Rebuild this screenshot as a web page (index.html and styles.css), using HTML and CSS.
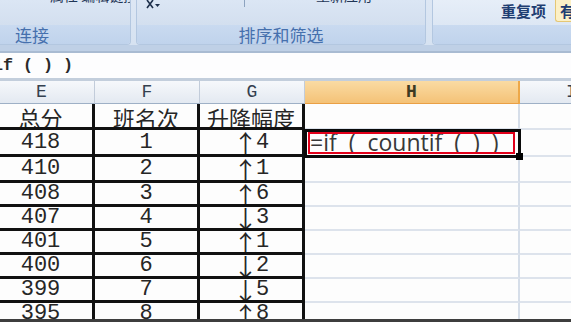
FILE: index.html
```html
<!DOCTYPE html>
<html lang="zh-CN">
<head>
    <meta charset="UTF-8">
    <meta name="viewport" content="width=device-width, initial-scale=1.0">
    <title>成绩表</title>
    <link rel="stylesheet" href="styles.css">
</head>
<body>
    <div class="window">
        <div class="ribbon">
            <div class="group group-links">
                <div class="group-body"><span class="cut-text">属性 编辑链接</span></div>
                <div class="group-label">连接</div>
            </div>
            <div class="group group-sort">
                <div class="group-body">
                    <svg class="sort-icon" width="16" height="10" viewBox="0 0 16 10">
                        <path d="M1 0 L7 8 M7 0 L1 8" stroke="#1d2f4a" stroke-width="1.6" fill="none"/>
                        <path d="M9 4 L14 4 L11.5 7 Z" fill="#1d2f4a"/>
                    </svg>
                    <span class="tick"></span>
                    <span class="cut-text cut-sort">重新应用</span>
                </div>
                <div class="group-label">排序和筛选</div>
            </div>
            <div class="group group-tools">
                <div class="group-body">
                    <span class="dup">重复项</span>
                    <span class="valid">有</span>
                </div>
                <div class="group-label"></div>
            </div>
        </div>

        <div class="formula-bar"><span class="formula">if ( ) )</span></div>

        <div class="sheet">
            <div class="col-head">E</div>
            <div class="col-head">F</div>
            <div class="col-head">G</div>
            <div class="col-head selected">H</div>
            <div class="col-head">I</div>

            <div class="cell cjk">总分</div>
            <div class="cell cjk">班名次</div>
            <div class="cell cjk">升降幅度</div>
            <div class="grid-cell"></div>
            <div class="grid-cell"></div>

            <div class="cell">418</div>
            <div class="cell">1</div>
            <div class="cell"><span class="arrow">↑</span>4</div>
            <div class="grid-cell active">
                <div class="edit">=if ( countif ( ) )</div>
                <span class="handle"></span>
            </div>
            <div class="grid-cell"></div>

            <div class="cell">410</div>
            <div class="cell">2</div>
            <div class="cell"><span class="arrow">↑</span>1</div>
            <div class="grid-cell"></div>
            <div class="grid-cell"></div>

            <div class="cell">408</div>
            <div class="cell">3</div>
            <div class="cell"><span class="arrow">↑</span>6</div>
            <div class="grid-cell"></div>
            <div class="grid-cell"></div>

            <div class="cell">407</div>
            <div class="cell">4</div>
            <div class="cell"><span class="arrow">↓</span>3</div>
            <div class="grid-cell"></div>
            <div class="grid-cell"></div>

            <div class="cell">401</div>
            <div class="cell">5</div>
            <div class="cell"><span class="arrow">↑</span>1</div>
            <div class="grid-cell"></div>
            <div class="grid-cell"></div>

            <div class="cell">400</div>
            <div class="cell">6</div>
            <div class="cell"><span class="arrow">↓</span>2</div>
            <div class="grid-cell"></div>
            <div class="grid-cell"></div>

            <div class="cell">399</div>
            <div class="cell">7</div>
            <div class="cell"><span class="arrow">↓</span>5</div>
            <div class="grid-cell"></div>
            <div class="grid-cell"></div>

            <div class="cell">395</div>
            <div class="cell">8</div>
            <div class="cell"><span class="arrow">↑</span>8</div>
            <div class="grid-cell"></div>
            <div class="grid-cell"></div>
        </div>
    </div>
</body>
</html>
```

FILE: styles.css
```css
body {
    margin: 0;
    background: #fff;
    overflow: hidden;
    font-family: "Noto Sans CJK SC", sans-serif;
}
.window {
    width: 571px;
    height: 322px;
    box-sizing: border-box;
    overflow: hidden;
    border-bottom: 3px solid #3e3e3e;
    background: #fdfdfd;
}

/* ribbon */
.ribbon {
    display: flex;
    gap: 5px;
    height: 53px;
    box-sizing: border-box;
    padding-bottom: 6px;
    border-bottom: 2px solid #a9bbd2;
    background: linear-gradient(to bottom, #dde7f4 0, #d6e2f1 45px, #bfd0e6 45px);
}
.group {
    display: flex;
    flex-direction: column;
    flex-shrink: 0;
    border: 1px solid #b3c7e0;
    border-top: none;
    border-radius: 0 0 4px 4px;
    overflow: hidden;
}
.group-links {
    width: 196px;
    margin-left: -67px;
}
.group-sort {
    width: 288px;
}
.group-tools {
    width: 150px;
    margin-left: 1px;
}
.group-body {
    flex: 1;
    display: flex;
    align-items: flex-start;
    background: linear-gradient(to bottom, #dbe6f4, #d3dfef);
}
.group-tools .group-body {
    background: linear-gradient(to bottom, #e6eef8, #dde7f4);
}
.group-label {
    height: 19px;
    line-height: 19px;
    text-align: center;
    font-size: 17px;
    color: #4670ad;
    background: linear-gradient(to bottom, #c9daf0, #c0d3ec);
}
.cut-text {
    font-size: 14px;
    line-height: 14px;
    color: #1f3556;
    margin-top: -12px;
    margin-left: 116px;
    white-space: nowrap;
}
.sort-icon {
    margin-left: 9px;
    flex-shrink: 0;
}
.tick {
    width: 1px;
    height: 7px;
    margin-left: 82px;
    background: #8da3bf;
    flex-shrink: 0;
}
.cut-sort {
    margin-left: 71px;
}
.dup {
    margin-left: 68px;
    margin-top: 3px;
    font-size: 15px;
    line-height: 15px;
    font-weight: bold;
    color: #1e3d72;
    white-space: nowrap;
}
.valid {
    margin-left: 9px;
    height: 21px;
    padding: 0 4px;
    line-height: 21px;
    font-size: 15px;
    font-weight: bold;
    color: #1e3d72;
    background: #fcf0c6;
    border: 1px solid #e5c775;
    border-top: none;
    border-right: none;
    border-radius: 0 0 0 3px;
}

/* formula bar */
.formula-bar {
    height: 25px;
    border-bottom: 3px solid #c3cedc;
    background: #fdfdfe;
    overflow: hidden;
}
.formula {
    display: block;
    margin-left: -7px;
    font-family: "Liberation Mono", monospace;
    font-size: 16.7px;
    line-height: 25px;
    font-weight: bold;
    color: #2a2a2a;
    white-space: pre;
}

/* sheet */
.sheet {
    display: grid;
    grid-template-columns: 106px 105px 105px 215px 104px;
    grid-template-rows: 23px 26px 27px 26px 24px 24px 24px 24px 24px 24px;
    margin-left: -11px;
}
.col-head {
    display: flex;
    align-items: center;
    justify-content: center;
    box-sizing: border-box;
    border-right: 1px solid #c2ccda;
    border-bottom: 1px solid #9eb0c6;
    background: linear-gradient(to bottom, #f6f8fb, #e3e9f1);
    font-family: "Liberation Mono", monospace;
    font-size: 18px;
    color: #34404f;
}
.col-head.selected {
    border-right: 2px solid #eda849;
    border-bottom: 1px solid #eaa045;
    background: linear-gradient(to bottom, #fadba3, #f4c277);
    color: #3d3a22;
    font-weight: bold;
}
.cell {
    display: flex;
    align-items: center;
    justify-content: center;
    box-sizing: border-box;
    border-right: 3px solid #111;
    border-bottom: 3px solid #111;
    background: #fdfdfd;
    font-family: "Liberation Mono", monospace;
    font-size: 22px;
    color: #262626;
    white-space: nowrap;
    overflow: hidden;
}
.cell.cjk {
    font-family: "Noto Sans CJK SC", sans-serif;
    font-size: 22px;
    padding-top: 2px;
}
.arrow {
    font-family: "Noto Sans CJK SC", sans-serif;
    font-size: 25px;
    line-height: 20px;
    margin-right: -2px;
}
.grid-cell {
    box-sizing: border-box;
    border-right: 2px solid #d6dee9;
    border-bottom: 2px solid #dde3ec;
    background: #fdfdfd;
}
.grid-cell.active {
    position: relative;
    z-index: 1;
    outline: 3px solid #0a0a0a;
    outline-offset: -2px;
    padding: 2px 3px 0 3px;
}
.edit {
    height: 22px;
    box-sizing: border-box;
    border: 2px solid #e2001a;
    padding-left: 0;
    font-family: "Open Sans", sans-serif;
    font-size: 23px;
    line-height: 17px;
    color: #383838;
    word-spacing: 6px;
    white-space: pre;
    overflow: hidden;
}
.handle {
    position: absolute;
    right: -5px;
    bottom: -5px;
    width: 7px;
    height: 7px;
    background: #000;
}
```
